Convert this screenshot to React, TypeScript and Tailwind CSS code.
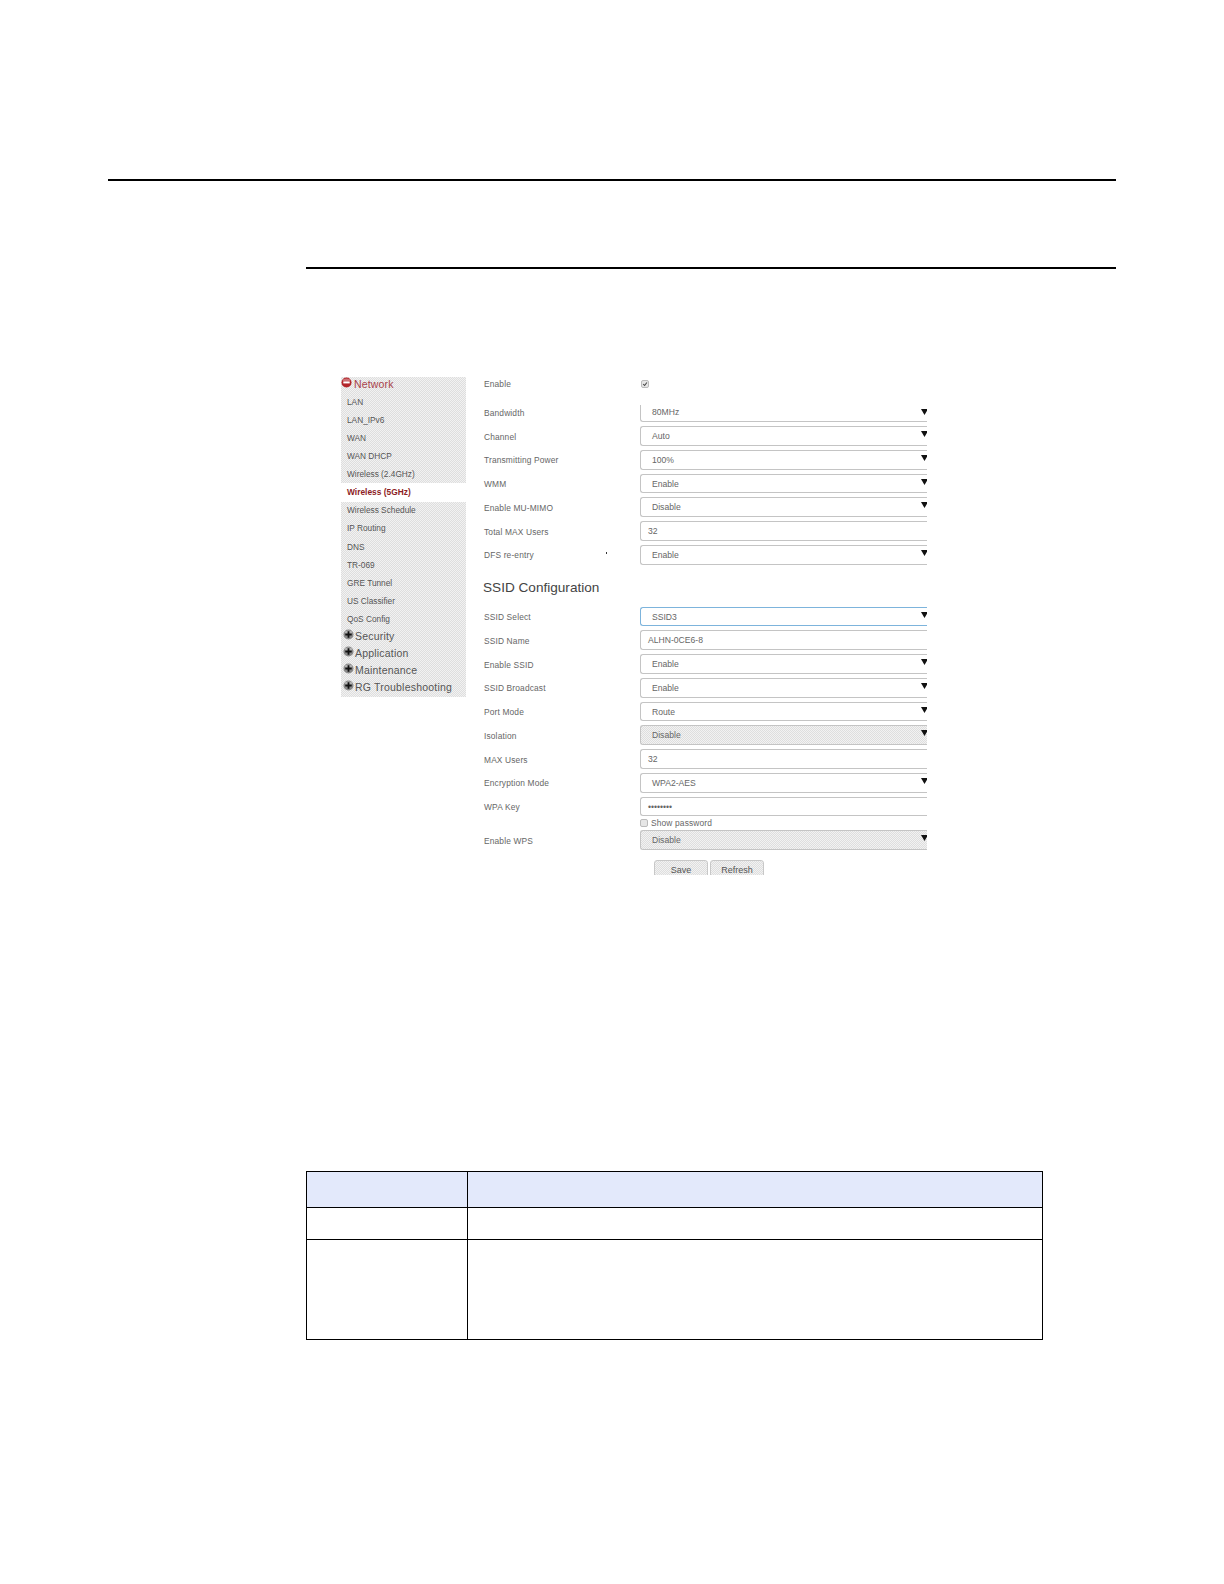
const navItems = [
  'LAN',
  'LAN_IPv6',
  'WAN',
  'WAN DHCP',
  'Wireless (2.4GHz)',
  'Wireless (5GHz)',
  'Wireless Schedule',
  'IP Routing',
  'DNS',
  'TR-069',
  'GRE Tunnel',
  'US Classifier',
  'QoS Config',
];

const collapsed = ['Security', 'Application', 'Maintenance', 'RG Troubleshooting'];

type Field = { label: string; value: string; input?: boolean; disabled?: boolean; focused?: boolean };

const radioFields: Field[] = [
  { label: 'Channel', value: 'Auto' },
  { label: 'Transmitting Power', value: '100%' },
  { label: 'WMM', value: 'Enable' },
  { label: 'Enable MU-MIMO', value: 'Disable' },
  { label: 'Total MAX Users', value: '32', input: true },
  { label: 'DFS re-entry', value: 'Enable' },
];

const ssidFields: Field[] = [
  { label: 'SSID Select', value: 'SSID3', focused: true },
  { label: 'SSID Name', value: 'ALHN-0CE6-8', input: true },
  { label: 'Enable SSID', value: 'Enable' },
  { label: 'SSID Broadcast', value: 'Enable' },
  { label: 'Port Mode', value: 'Route' },
  { label: 'Isolation', value: 'Disable', disabled: true },
  { label: 'MAX Users', value: '32', input: true },
  { label: 'Encryption Mode', value: 'WPA2-AES' },
  { label: 'WPA Key', value: '••••••••', input: true },
];

const dither =
  'bg-[repeating-conic-gradient(#dedede_0_25%,#f2f2f2_0_50%)] bg-[length:2px_2px]';

function Arrow() {
  return (
    <svg viewBox="0 0 6 6" className="absolute right-0 top-[4px] h-[6px] w-[6px]">
      <polygon points="0,0 7,0 3.5,6" fill="#111" />
    </svg>
  );
}

function ToggleIcon({ open }: { open?: boolean }) {
  return (
    <svg viewBox="0 0 12 12" className="mt-[-5px] h-[11px] w-[11px] shrink-0">
      <circle cx="6" cy="6" r="5.5" fill={open ? '#b3262b' : '#8a8a8a'} />
      <ellipse cx="6" cy="3.6" rx="4" ry="2" fill="#fff" opacity="0.35" />
      {open ? (
        <rect x="2.5" y="5" width="7" height="2" fill="#fff" />
      ) : (
        <path d="M2.5 5h2.5V2.5h2V5h2.5v2H7v2.5H5V7H2.5z" fill="#111" />
      )}
    </svg>
  );
}

function Sidebar() {
  return (
    <aside className={`w-[125px] pb-[1px] ${dither}`}>
      <div className="flex h-[16px] items-center text-[10.5px] tracking-[0.15px] text-[#a8424a]">
        <ToggleIcon open />
        <span className="ml-[2px]">Network</span>
      </div>
      {navItems.map((item) =>
        item === 'Wireless (5GHz)' ? (
          <div key={item} className="flex h-[18.1px] items-center bg-white pl-[6px] text-[8.4px] font-bold text-[#8c1c24]">
            {item}
          </div>
        ) : (
          <div key={item} className="flex h-[18.1px] items-center pl-[6px] text-[8.3px] text-[#555]">
            {item}
          </div>
        ),
      )}
      {collapsed.map((item) => (
        <div key={item} className="flex h-[17px] items-center pl-[2px] text-[10.5px] tracking-[0.2px] text-[#555]">
          <ToggleIcon />
          <span className="ml-[1px]">{item}</span>
        </div>
      ))}
    </aside>
  );
}

function CheckBox({ checked }: { checked?: boolean }) {
  return (
    <span className="flex h-[8px] w-[8px] shrink-0 items-center justify-center rounded-[2px] border border-[#bbb] bg-[#e6e6e6]">
      {checked && (
        <svg viewBox="0 0 8 8" className="h-[8px] w-[8px]">
          <path d="M1.5 4l2 2 3-4" fill="none" stroke="#444" strokeWidth="1.4" />
        </svg>
      )}
    </span>
  );
}

function Control({ field }: { field: Field }) {
  const tone = field.disabled ? dither : 'bg-white';
  const edge = field.focused ? 'border-[#7db4dc]' : 'border-[#c4c4c4]';
  return (
    <div className={`relative h-full w-[287px] rounded-l-[3px] border border-r-0 ${edge} ${tone}`}>
      <span className={`absolute top-[3px] text-[8.6px] leading-[12px] text-[#666] ${field.input ? 'left-[7px]' : 'left-[11px]'}`}>
        {field.value}
      </span>
      {!field.input && <Arrow />}
    </div>
  );
}

function Row({ field }: { field: Field }) {
  return (
    <div className="flex h-[19.75px] items-center">
      <label className="w-[156px] pt-[2px] text-[8.4px] tracking-[0.15px] text-[#666]">{field.label}</label>
      <Control field={field} />
    </div>
  );
}

function ConfigForm() {
  return (
    <div className="relative ml-[18px] w-[443px]">
      {/* stray speck from the scan */}
      <span className="absolute left-[122px] top-[175px] h-[2px] w-[1px] bg-[#333]" />

      <div className="flex h-[14px] items-center">
        <label className="w-[157px] text-[8.4px] tracking-[0.15px] text-[#666]">Enable</label>
        <CheckBox checked />
      </div>

      {/* bandwidth row: its top edge is cut off in the capture */}
      <div className="mt-[14px] flex h-[17px] items-center">
        <label className="w-[156px] text-[8.4px] tracking-[0.15px] text-[#666]">Bandwidth</label>
        <div className="relative h-full w-[287px] rounded-bl-[3px] border-b border-l border-[#c4c4c4]">
          <span className="absolute left-[11px] top-[1px] text-[8.6px] leading-[12px] text-[#666]">80MHz</span>
          <Arrow />
        </div>
      </div>

      <div className="mt-[4px] flex flex-col gap-[4px]">
        {radioFields.map((f) => (
          <Row key={f.label} field={f} />
        ))}
      </div>

      <h2 className="ml-[-1px] flex h-[42.1px] items-start pt-[14px] text-[13.6px] leading-[18px] text-[#444]">SSID Configuration</h2>

      <div className="flex flex-col gap-[4px]">
        {ssidFields.map((f) => (
          <Row key={f.label} field={f} />
        ))}
      </div>

      <div className="flex h-[14px] items-center pl-[156px] text-[8.4px] tracking-[0.15px] text-[#666]">
        <span className="mr-[3px]">
          <CheckBox />
        </span>
        Show password
      </div>

      <Row field={{ label: 'Enable WPS', value: 'Disable', disabled: true }} />

      <div className="mt-[9.5px] flex h-[15px] gap-[2px] overflow-hidden pl-[170px]">
        {['Save', 'Refresh'].map((b) => (
          <button
            key={b}
            className={`h-[24px] w-[54px] rounded-[3px] border border-[#c8c8c8] pb-[2px] text-[9px] text-[#555] ${dither}`}
          >
            {b}
          </button>
        ))}
      </div>
    </div>
  );
}

function InfoTable() {
  return (
    <div className="ml-[306px] mt-[296.5px] grid w-[737px] grid-cols-[161px_1fr] grid-rows-[36px_32px_99px] border border-black">
      <div className="border-r border-b border-black bg-[#e3e9fb]" />
      <div className="border-b border-black bg-[#e3e9fb]" />
      <div className="border-r border-b border-black" />
      <div className="border-b border-black" />
      <div className="border-r border-black" />
      <div />
    </div>
  );
}

export default function App() {
  return (
    <div className="h-[1584px] w-[1224px] overflow-hidden bg-white pt-[179px] font-['Liberation_Sans',Arial,sans-serif]">
      <div className="ml-[108px] h-[2px] w-[1008px] bg-black" />
      <div className="ml-[306px] mt-[86px] h-[2px] w-[810px] bg-black" />
      <div className="ml-[341px] mt-[108px] flex items-start">
        <Sidebar />
        <ConfigForm />
      </div>
      <InfoTable />
    </div>
  );
}
